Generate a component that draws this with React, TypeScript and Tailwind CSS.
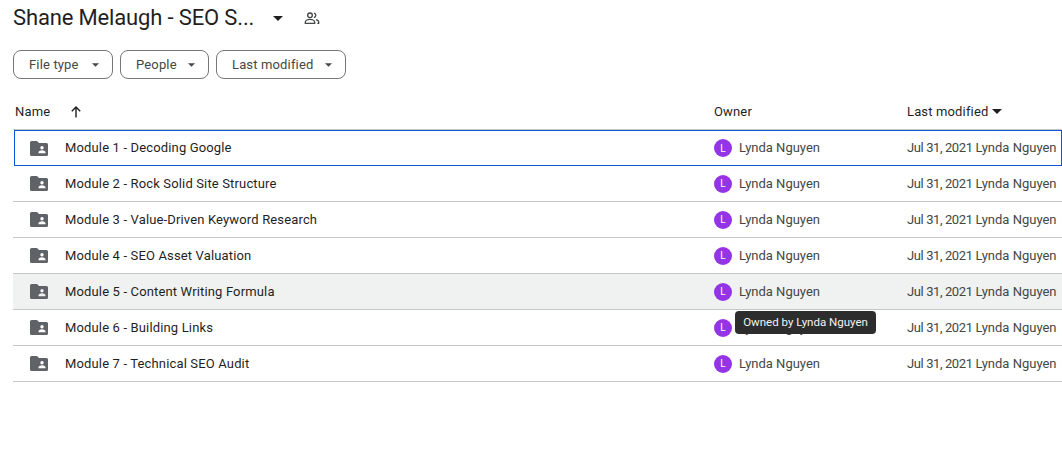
const modules = [
  "Module 1 - Decoding Google",
  "Module 2 - Rock Solid Site Structure",
  "Module 3 - Value-Driven Keyword Research",
  "Module 4 - SEO Asset Valuation",
  "Module 5 - Content Writing Formula",
  "Module 6 - Building Links",
  "Module 7 - Technical SEO Audit",
];

function Caret({ className }: { className: string }) {
  return (
    <svg className={className} viewBox="0 0 10 5" fill="currentColor">
      <path d="M0 0h10L5 5z" />
    </svg>
  );
}

function SharedFolder() {
  return (
    <svg className="w-[18px] h-[15px] text-[#5f6368]" viewBox="0 0 18 15" fill="currentColor">
      <path
        fillRule="evenodd"
        d="M1.5 0H7l2 2h7.500A1.500 1.500 0 0 1 18 3.500v10a1.500 1.500 0 0 1-1.500 1.500h-15A1.500 1.500 0 0 1 0 13.500v-12A1.500 1.500 0 0 1 1.500 0zM12 5a1.700 1.700 0 1 0 0 3.400A1.700 1.700 0 0 0 12 5zM8.500 12.200h7v-1c0-1.300-2.300-2-3.500-2s-3.500.7-3.500 2z"
      />
    </svg>
  );
}

function Chip({ label, width }: { label: string; width: string }) {
  return (
    <button className={`${width} h-[29px] flex items-center justify-between pl-[15px] pr-[13px] rounded-lg border border-[#747775] text-[13px] tracking-[0.15px] text-[#444746]`}>
      {label}
      <Caret className="w-[7px] h-[4px] text-[#444746]" />
    </button>
  );
}

export default function App() {
  return (
    <div className="w-[1062px] h-[454px] overflow-hidden bg-white text-[#1f1f1f] font-['Roboto',sans-serif]">
      <div className="h-[50px] pl-[13px] pt-[4px] flex items-start">
        <h1 className="text-[22px] leading-[28px] tracking-[-0.15px]">Shane Melaugh - SEO S...</h1>
        <Caret className="w-[10px] h-[5px] ml-[19px] mt-[12px] text-[#1f1f1f]" />
        <svg className="w-[16px] h-[16px] ml-[21px] mt-[6px] text-[#444746]" viewBox="0 0 24 24" fill="none" stroke="currentColor" strokeWidth="2">
          <circle cx="9" cy="8" r="3.500" />
          <path d="M2 20v-2c0-2.500 4-4 7-4s7 1.500 7 4v2zM15 4.600a3.500 3.500 0 0 1 0 6.800M18 14.500c2.500.6 4 1.800 4 3.500v2h-2" />
        </svg>
      </div>

      <div className="pl-[13px] flex gap-[7px]">
        <Chip label="File type" width="w-[100px]" />
        <Chip label="People" width="w-[89px]" />
        <Chip label="Last modified" width="w-[130px]" />
      </div>

      <div className="ml-[13px] mt-[15px] h-[36px] flex items-center border-b border-[#c7c7c7] text-[13px] tracking-[0.15px] text-[#1f1f1f]">
        <div className="w-[701px] pl-[2px] flex items-center">
          <span>Name</span>
          <svg className="w-[12px] h-[12px] ml-[20px] text-[#1f1f1f]" viewBox="0 0 12 12" fill="none" stroke="currentColor" strokeWidth="1.400">
            <path d="M6 11.500V1M1.800 5.200 6 1l4.200 4.200" />
          </svg>
        </div>
        <div className="w-[193px]">Owner</div>
        <div className="flex items-center gap-[4px]">
          Last modified
          <Caret className="w-[10px] h-[5px] text-[#1f1f1f]" />
        </div>
      </div>

      <div className="relative ml-[13px]">
        {modules.map((name, i) => (
          <div
            key={name}
            className={`h-[36px] flex items-center text-[13px] whitespace-nowrap ${
              i === 0 ? "border border-[#0b57d0] ml-[1px]" : "border-b border-[#c7c7c7]"
            } ${i === 4 ? "bg-[#f0f1f1]" : ""}`}
          >
            <div className={`${i === 0 ? "w-[699px] pl-[15px]" : "w-[701px] pl-[17px]"} flex items-center`}>
              <SharedFolder />
              <span className="ml-[17px] tracking-[0.15px]">{name}</span>
            </div>
            <div className="w-[193px] flex items-center text-[#444746]">
              <span className="w-[18px] h-[18px] rounded-full bg-[#9334e6] text-white text-[10px] flex items-center justify-center">L</span>
              <span className="ml-[7px]">Lynda Nguyen</span>
            </div>
            <div className="flex gap-[3px] text-[#444746]">
              <span className="tracking-[-0.4px]">Jul 31, 2021</span>
              <span>Lynda Nguyen</span>
            </div>
          </div>
        ))}

        <div className="absolute left-[722px] top-[181px] w-[141px] h-[23px] rounded bg-[#2d2d2d] text-[#f2f2f2] text-[11.5px] flex items-center justify-center whitespace-nowrap">
          Owned by Lynda Nguyen
        </div>
      </div>
    </div>
  );
}
